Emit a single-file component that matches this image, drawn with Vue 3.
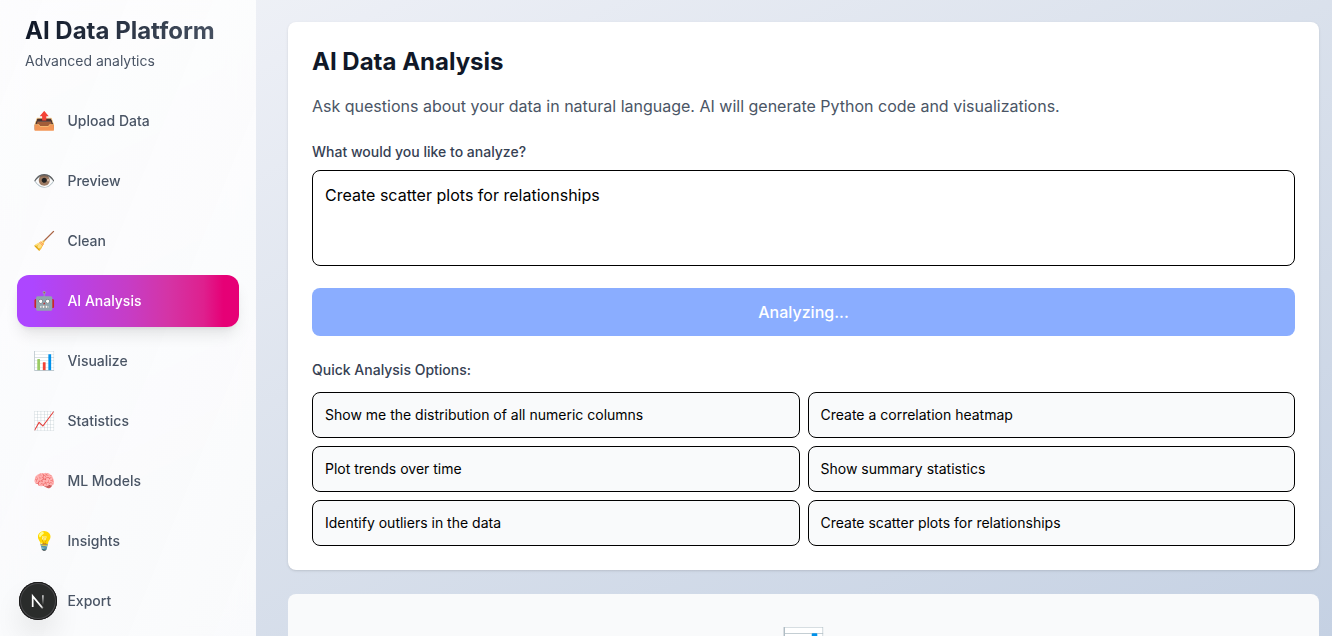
<script setup>
const items = [
  { icon: '📤', label: 'Upload Data' },
  { icon: '👁️', label: 'Preview' },
  { icon: '🧹', label: 'Clean' },
  { icon: '🤖', label: 'AI Analysis', active: true },
  { icon: '📊', label: 'Visualize' },
  { icon: '📈', label: 'Statistics' },
  { icon: '🧠', label: 'ML Models' },
  { icon: '💡', label: 'Insights' },
  { icon: '💾', label: 'Export', covered: true },
]
const prompts = [
  'Show me the distribution of all numeric columns',
  'Create a correlation heatmap',
  'Plot trends over time',
  'Show summary statistics',
  'Identify outliers in the data',
  'Create scatter plots for relationships',
]
</script>

<template>
  <div class="shell">
    <aside class="sidebar">
      <header class="brand">
        <h1>AI Data Platform</h1>
        <p>Advanced analytics</p>
      </header>
      <nav>
        <button v-for="item in items" :key="item.label" class="nav-item" :class="{ active: item.active }">
          <span class="icon" :class="{ covered: item.covered }">{{ item.icon }}</span>
          <span class="name">{{ item.label }}</span>
        </button>
      </nav>
    </aside>

    <main>
      <section class="card">
        <h2>AI Data Analysis</h2>
        <p class="intro">Ask questions about your data in natural language. AI will generate Python code and visualizations.</p>
        <label for="question">What would you like to analyze?</label>
        <textarea id="question" spellcheck="false" value="Create scatter plots for relationships"></textarea>
        <button class="analyze">Analyzing...</button>
        <h3>Quick Analysis Options:</h3>
        <div class="options">
          <button v-for="p in prompts" :key="p">{{ p }}</button>
        </div>
      </section>
      <section class="empty">
        <div class="big">📊</div>
      </section>
    </main>

    <div class="dev-badge">
      <svg width="38" height="38" viewBox="0 0 38 38" fill="none">
        <defs>
          <linearGradient id="diag" x1="20" y1="20" x2="25" y2="27" gradientUnits="userSpaceOnUse">
            <stop stop-color="#fff" />
            <stop offset=".6" stop-color="#fff" stop-opacity=".9" />
            <stop offset="1" stop-color="#fff" stop-opacity=".1" />
          </linearGradient>
          <linearGradient id="stem" x1="24" y1="13" x2="24" y2="23" gradientUnits="userSpaceOnUse">
            <stop stop-color="#fff" stop-opacity=".85" />
            <stop offset="1" stop-color="#fff" stop-opacity="0" />
          </linearGradient>
        </defs>
        <path d="M13.7 25V14.2L23.8 26.4" stroke="url(#diag)" stroke-width="1.7" />
        <path d="M23.9 13.2V23" stroke="url(#stem)" stroke-width="1.6" />
      </svg>
    </div>
  </div>
</template>

<style>
body { overflow: hidden; }
</style>

<style scoped>
* { box-sizing: border-box; margin: 0; }
button, textarea { font: inherit; }
.shell {
  position: relative;
  display: flex;
  height: 636px;
  overflow: hidden;
  font-family: Inter, "Noto Color Emoji", sans-serif;
  background: linear-gradient(to bottom right, #f2f4f7, #ebeef5 15%, #dae1ec 50%, #c5d1e3);
}
.sidebar {
  flex: 0 0 256px;
  height: 636px;
  padding: 15px 17px;
  background: linear-gradient(to bottom right, rgba(253, 253, 254, 0.9), rgba(254, 254, 254, 0.88));
  backdrop-filter: blur(12px);
}
.brand { padding: 0 8px; margin-bottom: 24px; }
h1 {
  width: 206px;
  font-size: 24px;
  line-height: 32px;
  font-weight: 700;
  color: transparent;
  background: linear-gradient(to right, #101828, #4a5565);
  background-clip: text;
}
.brand p { margin-top: 4px; font-size: 14px; line-height: 20px; color: #4a5565; }
nav { display: flex; flex-direction: column; gap: 8px; }
.nav-item {
  display: flex;
  align-items: center;
  gap: 12px;
  height: 52px;
  padding: 0 16px;
  border: 0;
  border-radius: 12px;
  background: none;
  color: #4a5565;
  font-size: 14px;
  font-weight: 500;
  text-align: left;
}
.nav-item.active {
  color: #fff;
  background: linear-gradient(to right, #ad46ff 7%, #c63dc6 50%, #d434a6 68%, #de208e 84%, #e60076 93%);
  box-shadow: 0 10px 15px -3px rgba(0, 0, 0, 0.1), 0 4px 6px -4px rgba(0, 0, 0, 0.1);
}
.icon { font-size: 18px; line-height: 28px; }
.name { line-height: 20px; padding-bottom: 1px; }
.covered { visibility: hidden; }
main { flex: 1; padding: 22px 13px 0 32px; }
.card {
  height: 548px;
  padding: 24px;
  border-radius: 8px;
  background: #fff;
  box-shadow: 0 1px 3px rgba(0, 0, 0, 0.1), 0 1px 2px -1px rgba(0, 0, 0, 0.1);
}
h2 { font-size: 24px; line-height: 32px; font-weight: 700; color: #101828; }
.intro { margin-top: 16px; font-size: 16px; line-height: 24px; color: #4a5565; }
label { display: block; margin-top: 24px; font-size: 14px; line-height: 20px; font-weight: 500; color: #364153; }
textarea {
  display: block;
  width: 100%;
  height: 96px;
  margin-top: 8px;
  padding: 12px;
  border: 1px solid #000;
  border-radius: 8px;
  resize: none;
  outline: none;
  background: #fff;
  color: #000;
  font-size: 16px;
  line-height: 24px;
  letter-spacing: 0.012px;
}
.analyze {
  width: 100%;
  height: 48px;
  margin-top: 22px;
  border: 0;
  border-radius: 8px;
  background: #8aadff;
  color: #fff;
  font-weight: 500;
  font-size: 16px;
}
h3 { margin-top: 24px; font-size: 14px; line-height: 20px; font-weight: 500; color: #364153; }
.options { display: grid; grid-template-columns: 1fr 1fr; gap: 8px; margin-top: 12px; }
.options button {
  height: 46px;
  padding: 12px;
  border: 1px solid #000;
  border-radius: 8px;
  background: #f9fafb;
  color: #000;
  font-size: 14px;
  line-height: 20px;
  text-align: left;
}
.empty {
  height: 260px;
  margin-top: 24px;
  padding-top: 24px;
  border-radius: 8px;
  background: #f9fafb;
  text-align: center;
}
.big { padding-left: 1px; font-size: 36px; line-height: 56px; }
.dev-badge {
  position: absolute;
  left: 19px;
  top: 582px;
  width: 38px;
  height: 38px;
  border-radius: 50%;
  background: #2a2c2b;
  box-shadow: inset 0 0 0 1px #171717, inset 0 0 0 2px #4a4a4c, 0 16px 32px -8px rgba(0, 0, 0, 0.24);
}
.dev-badge svg { display: block; }
</style>
